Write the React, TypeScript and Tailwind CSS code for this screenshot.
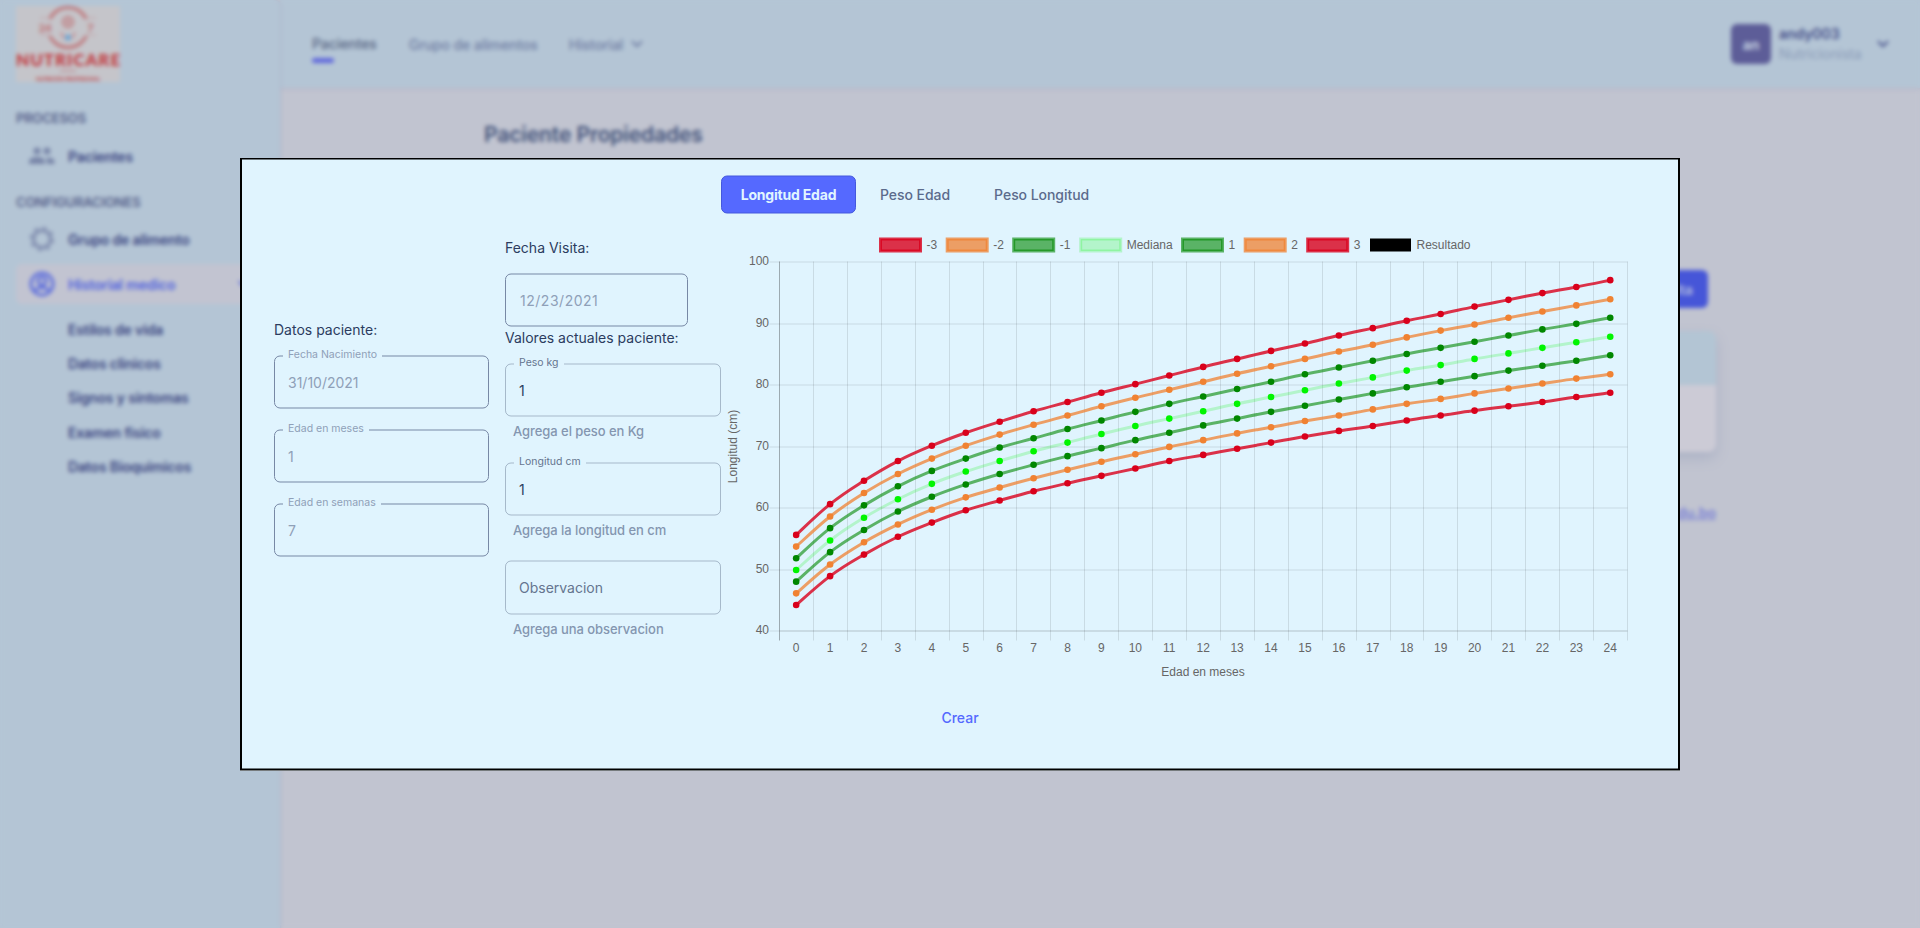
import type { ReactNode } from "react";

const SERIES = [
  { label: "-3", rgb: "217,0,27", alpha: 0.8, data: [44.2, 48.9, 52.4, 55.3, 57.6, 59.6, 61.2, 62.7, 64.0, 65.2, 66.4, 67.6, 68.6, 69.6, 70.6, 71.6, 72.5, 73.3, 74.2, 75.0, 75.8, 76.5, 77.2, 78.0, 78.7] },
  { label: "-2", rgb: "240,130,50", alpha: 0.75, data: [46.1, 50.8, 54.4, 57.3, 59.7, 61.7, 63.3, 64.8, 66.2, 67.5, 68.7, 69.9, 71.0, 72.1, 73.1, 74.1, 75.0, 76.0, 76.9, 77.7, 78.6, 79.4, 80.2, 81.0, 81.7] },
  { label: "-1", rgb: "0,135,0", alpha: 0.6, data: [48.0, 52.8, 56.4, 59.4, 61.8, 63.8, 65.5, 67.0, 68.4, 69.7, 71.0, 72.2, 73.4, 74.5, 75.6, 76.6, 77.6, 78.6, 79.6, 80.5, 81.4, 82.3, 83.1, 83.9, 84.8] },
  { label: "Mediana", rgb: "0,245,0", alpha: 0.2, data: [49.9, 54.7, 58.4, 61.4, 63.9, 65.9, 67.6, 69.2, 70.6, 72.0, 73.3, 74.5, 75.7, 76.9, 78.0, 79.1, 80.2, 81.2, 82.3, 83.2, 84.2, 85.1, 86.0, 86.9, 87.8] },
  { label: "1", rgb: "0,135,0", alpha: 0.6, data: [51.8, 56.7, 60.4, 63.5, 66.0, 68.0, 69.8, 71.3, 72.8, 74.2, 75.6, 76.9, 78.1, 79.3, 80.5, 81.7, 82.8, 83.9, 85.0, 86.0, 87.0, 88.0, 89.0, 89.9, 90.9] },
  { label: "2", rgb: "240,130,50", alpha: 0.75, data: [53.7, 58.6, 62.4, 65.5, 68.0, 70.1, 71.9, 73.5, 75.0, 76.5, 77.9, 79.2, 80.5, 81.8, 83.0, 84.2, 85.4, 86.5, 87.7, 88.8, 89.8, 90.9, 91.9, 92.9, 93.9] },
  { label: "3", rgb: "217,0,27", alpha: 0.8, data: [55.6, 60.6, 64.4, 67.6, 70.1, 72.2, 74.0, 75.7, 77.2, 78.7, 80.1, 81.5, 82.9, 84.2, 85.5, 86.7, 88.0, 89.2, 90.4, 91.5, 92.7, 93.8, 94.9, 95.9, 97.0] },
];

const LEGEND_X = [880.5, 947.2, 1013.7, 1080.7, 1182.5, 1245.2, 1307.7];
const LEFT = 779.2;
const STEP = 33.92;
const TOP = 262.2;
const BOTTOM = 631.4;

const px = (i: number) => LEFT + STEP / 2 + i * STEP;
const py = (v: number) => BOTTOM - ((v - 40) / 60) * (BOTTOM - TOP);

function curve(data: number[]) {
  const p = data.map((v, i) => [px(i), py(v)]);
  let d = `M${p[0][0]} ${p[0][1]}`;
  for (let i = 0; i < p.length - 1; i++) {
    const a = p[Math.max(i - 1, 0)];
    const b = p[i];
    const c = p[i + 1];
    const e = p[Math.min(i + 2, p.length - 1)];
    const k = 0.2;
    d += `C${b[0] + (c[0] - a[0]) * k} ${b[1] + (c[1] - a[1]) * k} ${c[0] - (e[0] - b[0]) * k} ${c[1] - (e[1] - b[1]) * k} ${c[0]} ${c[1]}`;
  }
  return d;
}

function GrowthChart() {
  const grid = "rgba(0,0,0,0.1)";
  return (
    <svg
      width="925"
      height="477"
      viewBox="721 219 925 477"
      className="block shrink-0 font-['Liberation_Sans',Arial,sans-serif] text-[12px]"
      fill="#666"
    >
      {SERIES.map((s, i) => (
        <g key={i}>
          <rect x={LEGEND_X[i]} y="239.5" width="40" height="12" fill={`rgba(${s.rgb},${s.alpha})`} stroke={`rgba(${s.rgb},${s.alpha})`} strokeWidth="3" />
          <text x={LEGEND_X[i] + 46} y="249">{s.label}</text>
        </g>
      ))}
      <rect x="1370" y="239" width="41" height="13" fill="#000" />
      <text x="1416.5" y="249">Resultado</text>

      {[40, 50, 60, 70, 80, 90, 100].map((v) => {
        const y = Math.round(py(v)) + 0.5;
        return (
          <g key={v}>
            <line x1="769.5" x2="1627.5" y1={y} y2={y} stroke={grid} />
            {v === 40 && <line x1="780" x2="1627.5" y1={y} y2={y} stroke={grid} />}
            <text x="769" y={Math.round(py(v)) + 3.5} textAnchor="end">{v}</text>
          </g>
        );
      })}
      {Array.from({ length: 26 }, (_, i) => {
        const x = Math.round(LEFT - 0.2 + i * STEP) + 0.5;
        return <line key={i} x1={x} x2={x} y1="262" y2="641" stroke={i === 0 ? "rgba(0,0,0,0.3)" : grid} />;
      })}
      {Array.from({ length: 25 }, (_, i) => (
        <text key={i} x={px(i)} y="652" textAnchor="middle">{i}</text>
      ))}
      <text x="1203" y="676" textAnchor="middle">Edad en meses</text>
      <text transform="translate(736.5 447) rotate(-90)" textAnchor="middle">Longitud (cm)</text>

      {SERIES.map((s, i) => (
        <path key={i} d={curve(s.data)} fill="none" stroke={`rgba(${s.rgb},${s.alpha})`} strokeWidth="3" />
      ))}
      {SERIES.map((s, i) =>
        s.data.map((v, j) => <circle key={`${i}-${j}`} cx={px(j)} cy={py(v)} r="3.3" fill={`rgb(${s.rgb})`} />),
      )}
    </svg>
  );
}

function Field({ label, value, disabled }: { label: string; value: string; disabled?: boolean }) {
  return (
    <fieldset
      className={`h-[59px] w-full rounded-[6px] border px-[8px] pb-0 ${disabled ? "border-[#7788a5]" : "border-[#223354]/30"}`}
    >
      <legend className={`h-[13px] px-[5px] text-[10.5px] leading-[10px] ${disabled ? "text-[#8fa0b8]" : "text-[#65748f]"}`}>{label}</legend>
      <div className={`px-[5px] pt-[10px] text-[14px] leading-[20px] ${disabled ? "text-[#8fa0b8]" : "text-[#2c3c60]"}`}>{value}</div>
    </fieldset>
  );
}

function Helper({ children }: { children: ReactNode }) {
  return <div className="pl-[8px] text-[13px] font-medium leading-[20px] tracking-[-0.060px] text-[#8496b0]">{children}</div>;
}

function Chevron() {
  return (
    <svg width="12" height="8" viewBox="0 0 12 8" fill="none" stroke="currentColor" strokeWidth="2">
      <path d="M1 1.2l5 5 5-5" />
    </svg>
  );
}

function Logo() {
  return (
    <svg width="104" height="76" viewBox="0 0 104 76" className="overflow-visible font-['Lato',sans-serif]">
      <rect width="104" height="76" fill="#c5c5ca" />
      <circle cx="52" cy="21.5" r="20" fill="none" stroke="#bf7478" strokeWidth="3" />
      <rect x="24" y="13" width="11" height="17" fill="#c5c5ca" />
      <rect x="69" y="13" width="11" height="17" fill="#c5c5ca" />
      <path d="M24 12h10M24 29h10M70 12h10M70 29h10" stroke="#c3a0a5" strokeWidth="1" />
      <text x="22.500" y="25.500" fontSize="11.500" fontWeight="900" fill="#bf7478">24</text>
      <text x="71" y="25.500" fontSize="11.500" fontWeight="900" fill="#bf7478">7</text>
      <circle cx="52" cy="16" r="5" fill="none" stroke="#bf7478" strokeWidth="2" />
      <circle cx="52" cy="16" r="2" fill="#bf7478" />
      <path d="M45.500 26q0 5 4 6M58.500 26q0 5-4 6" fill="none" stroke="#c48f94" strokeWidth="2" />
      <circle cx="52" cy="31.5" r="3" fill="#67a5d6" />
      <text x="52" y="60" textAnchor="middle" textLength="104" fontSize="17" fontWeight="900" fill="#c2393e">NUTRICARE</text>
      <rect x="44" y="64" width="16" height="1.5" fill="#c08a90" />
      <text x="52" y="74.500" textAnchor="middle" textLength="64" lengthAdjust="spacingAndGlyphs" fontSize="5.500" fontWeight="900" fill="#bd4a50">NUTRICIÓN PROFESIONAL</text>
    </svg>
  );
}

function Background() {
  return (
    <div className="flex h-full w-full bg-[#c1c4d0]">
      <aside className="z-10 flex w-[280px] shrink-0 flex-col rounded-tr-[6px] bg-[#b4c5d5] pl-4 pt-[6px] text-[14px] font-semibold tracking-[-0.150px] text-[#3b4581] shadow-[1px_0_2px_#adb4c8]">
        <Logo />
        <div className="mt-[26px] text-[13px] leading-5 text-[#56608a]">PROCESOS</div>
        <div className="mt-[8px] flex h-10 items-center pl-[13px]">
          <svg width="26" height="18" viewBox="0 0 26 18" fill="#7885a8">
            <circle cx="8" cy="4" r="3.5" />
            <circle cx="18" cy="4" r="3.5" />
            <path d="M0 17v-3q1-4 8-4t8 4v3zM18 17v-3l-1-3q7-1 8.500 3v3z" />
          </svg>
          <span className="ml-[13px]">Pacientes</span>
        </div>
        <div className="mt-4 text-[13px] leading-5 text-[#56608a]">CONFIGURACIONES</div>
        <div className="mt-[7px] flex h-10 items-center pl-[13px]">
          <svg width="26" height="26" viewBox="0 0 26 26" fill="none" stroke="#8592b2">
            <circle cx="13" cy="13" r="8.500" strokeWidth="3.500" />
            <circle cx="13" cy="13" r="11" strokeWidth="2.500" strokeDasharray="4.320 4.320" />
          </svg>
          <span className="ml-[13px]">Grupo de alimento</span>
        </div>
        <div className="mr-4 mt-[5px] flex h-10 items-center rounded-[6px] bg-[#c2c4d1] pl-[13px] pr-[14px] text-[#5163de]">
          <svg width="26" height="26" viewBox="0 0 26 26" fill="none" stroke="#6272dc" strokeWidth="3">
            <circle cx="13" cy="13" r="11" />
            <circle cx="13" cy="10" r="4" />
            <path d="M5 20q8-7 16 0" />
          </svg>
          <span className="ml-[13px] grow">Historial medico</span>
          <Chevron />
        </div>
        <div className="mt-[9px] flex flex-col pl-[52px] leading-[34.200px]">
          <span>Estilos de vida</span>
          <span>Datos clinicos</span>
          <span>Signos y sintomas</span>
          <span>Examen fisico</span>
          <span>Datos Bioquimicos</span>
        </div>
      </aside>
      <div className="flex min-w-0 grow flex-col">
        <header className="flex h-[88px] shrink-0 items-center bg-[#b4c5d5] pl-[32px] pr-[31px] text-[14px] font-medium tracking-[-0.080px] text-[#6f7da3] shadow-[0_1px_3px_#b3b0c5]">
          <div className="flex flex-col pt-[10px] text-[#566481]">
            <span className="leading-[18px]">Pacientes</span>
            <span className="mt-[5px] h-[5px] w-[22px] rounded bg-[#6068dc]" />
          </div>
          <span className="ml-8">Grupo de alimentos</span>
          <span className="ml-[31px] mr-2">Historial</span>
          <Chevron />
          <div className="ml-auto flex h-10 w-10 items-center justify-center rounded-[6px] bg-[#5d5d98] text-[14px] font-bold text-[#c3cfe0]">an</div>
          <div className="ml-2 flex w-[98px] flex-col leading-[20px]">
            <span className="font-semibold text-[#46508a]">andy003</span>
            <span className="font-normal text-[#8b9cb8]">Nutricionista</span>
          </div>
          <svg width="12" height="8" viewBox="0 0 12 8" fill="none" stroke="#46508a" strokeWidth="2">
            <path d="M1 1.200l5 5 5-5" />
          </svg>
        </header>
        <main className="flex flex-col pl-[204px] pr-[204px] pt-[32px]">
          <h1 className="text-[21px] font-semibold leading-[30px] tracking-[-0.100px] text-[#42527a]">Paciente Propiedades</h1>
          <div className="mr-2 mt-[120px] flex h-[38px] w-[160px] items-center justify-end self-end rounded-[6px] bg-[#4656d8] pr-[15px] text-[14px] font-bold text-[#a9b4df]">
            Crear consulta
          </div>
          <div className="mt-[23px] h-[121px] overflow-hidden rounded-[8px] bg-[#cccbd6] shadow-[0_6px_14px_#abb1c5]">
            <div className="h-[54px] bg-[#b3c5d4]" />
          </div>
          <div className="mt-[51px] self-end text-[14px] font-semibold leading-5 text-[#7a81d6] underline">univalle.edu.bo</div>
        </main>
      </div>
    </div>
  );
}

export default function App() {
  return (
    <div className="relative h-[928px] w-full overflow-hidden font-['Inter',sans-serif]">
      <Background />
      <div className="absolute inset-0 z-20 backdrop-blur-[2px]" />
      <div className="absolute left-1/2 top-1/2 z-30 flex h-[613px] w-[1440px] -translate-x-1/2 -translate-y-1/2 flex-col border-2 border-black bg-[#e0f4fe] text-[14px] text-[#2c3c60]">
        <div className="ml-[479px] mt-[16px] flex h-[38px] items-center text-[#5b6b8c]">
          <button className="h-[38px] w-[135px] rounded-[6px] border border-[#4458dd] bg-[#5569ff] pb-px font-bold tracking-[-0.200px] text-[#e0f5ff]">Longitud Edad</button>
          <button className="ml-[24px] pb-px font-medium tracking-[-0.050px]">Peso Edad</button>
          <button className="ml-[44px] pb-px font-medium tracking-[-0.050px]">Peso Longitud</button>
        </div>
        <div className="flex h-[482px] pl-[32px] pt-[5px]">
          <div className="w-[215px] shrink-0 pt-[100px]">
            <div className="leading-[21px]">Datos paciente:</div>
            <div className="mt-[10px] flex flex-col gap-[15px]">
              <Field label="Fecha Nacimiento" value="31/10/2021" disabled />
              <Field label="Edad en meses" value="1" disabled />
              <Field label="Edad en semanas" value="7" disabled />
            </div>
          </div>
          <div className="ml-[16px] w-[216px] shrink-0 pt-[18px]">
            <div className="leading-[21px]">Fecha Visita:</div>
            <div className="mt-[16px] flex h-[53px] w-[183px] items-center rounded-[6px] border border-[#7788a5] px-[14px] tracking-[0.520px] text-[#8fa0b8]">12/23/2021</div>
            <div className="leading-[21px]">Valores actuales paciente:</div>
            <div className="mt-[10px]">
              <Field label="Peso kg" value="1" />
              <div className="mt-[4px]"><Helper>Agrega el peso en Kg</Helper></div>
            </div>
            <div className="mt-[16px]">
              <Field label="Longitud cm" value="1" />
              <div className="mt-[4px]"><Helper>Agrega la longitud en cm</Helper></div>
            </div>
            <div className="mt-[21px]">
              <div className="flex h-[54px] items-center rounded-[6px] border border-[#223354]/30 px-[13px] pb-[2px] text-[#65748f]">Observacion</div>
              <div className="mt-[4px]"><Helper>Agrega una observacion</Helper></div>
            </div>
          </div>
          <GrowthChart />
        </div>
        <button className="mt-[12px] self-center font-medium leading-5 text-[#5569ff]">Crear</button>
      </div>
    </div>
  );
}
